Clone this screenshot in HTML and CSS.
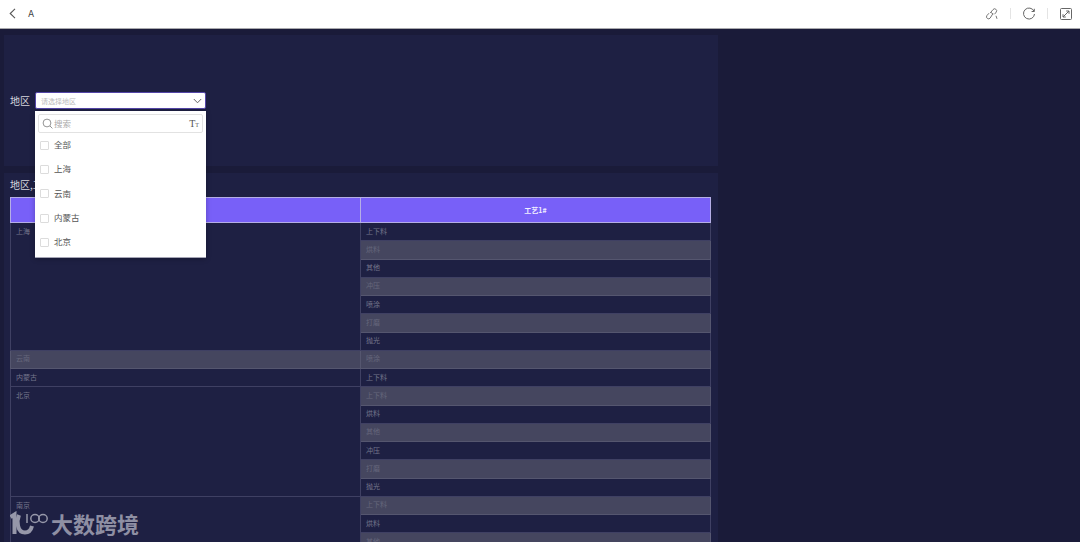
FILE: index.html
```html
<!DOCTYPE html>
<html lang="zh">
<head>
<meta charset="utf-8">
<title>A</title>
<link rel="stylesheet" href="styles.css">
</head>
<body>
<header class="topbar">
  <div class="topbar-left">
    <svg class="back" width="7" height="11" viewBox="0 0 7 11"><path d="M6 .8 1.2 5.5 6 10.2" fill="none" stroke="#555" stroke-width="1.1"/></svg>
    <span class="title">A</span>
  </div>
  <div class="topbar-right">
    <svg class="tool" width="14" height="14" viewBox="0 0 14 14" fill="none" stroke="#777" stroke-width="1"><path d="M5.2 6 8 2.6a2 2 0 0 1 3.2 2.5L9.6 7.2"/><path d="M8 6.5 5.2 11a2 2 0 0 1-3.3-2.4L4 6.2"/><path d="M6 5.4l2.2 1.8"/><path d="M11 8.8l1 3"/></svg>
    <span class="sep"></span>
    <svg class="tool" width="14" height="14" viewBox="0 0 14 14" fill="none" stroke="#666" stroke-width="1"><path d="M12 4.2A5.5 5.5 0 1 0 12.5 7"/><path d="M12.3 1.8v2.7H9.6"/></svg>
    <span class="sep"></span>
    <svg class="tool" width="14" height="14" viewBox="0 0 14 14" fill="none" stroke="#666" stroke-width="1"><rect x="1.5" y="1.5" width="11" height="11" rx="1"/><path d="M4 10 10 4M7.2 4H10v2.8M4 7.2V10h2.8"/></svg>
  </div>
</header>

<main class="content">
  <section class="panel panel-filter">
    <span class="filter-label">地区</span>
    <div class="select">
      <span class="select-placeholder">请选择地区</span>
      <svg width="9" height="6" viewBox="0 0 9 6"><path d="M.8 1 4.5 4.8 8.2 1" fill="none" stroke="#666" stroke-width="1"/></svg>
    </div>
  </section>

  <section class="panel panel-table">
    <h2 class="table-title">地区,工艺分布</h2>
    <table class="data">
      <thead>
        <tr><th>地区</th><th>工艺1#</th></tr>
      </thead>
      <tbody>
        <tr><td rowspan="7">上海</td><td>上下料</td></tr>
        <tr class="alt"><td>烘料</td></tr>
        <tr><td>其他</td></tr>
        <tr class="alt"><td>冲压</td></tr>
        <tr><td>喷涂</td></tr>
        <tr class="alt"><td>打磨</td></tr>
        <tr><td>抛光</td></tr>
        <tr class="alt"><td>云南</td><td>喷涂</td></tr>
        <tr><td>内蒙古</td><td>上下料</td></tr>
        <tr><td rowspan="6">北京</td><td class="alt-cell">上下料</td></tr>
        <tr><td>烘料</td></tr>
        <tr><td class="alt-cell">其他</td></tr>
        <tr><td>冲压</td></tr>
        <tr><td class="alt-cell">打磨</td></tr>
        <tr><td>抛光</td></tr>
        <tr><td rowspan="3">南京</td><td class="alt-cell">上下料</td></tr>
        <tr><td>烘料</td></tr>
        <tr><td class="alt-cell">其他</td></tr>
      </tbody>
    </table>
  </section>
</main>

<div class="dropdown">
  <div class="search">
    <svg width="11" height="11" viewBox="0 0 11 11" fill="none" stroke="#888" stroke-width=".9"><circle cx="5" cy="5" r="3.9"/><path d="M8 8l2.4 2.4"/></svg>
    <span class="search-text">搜索</span>
    <span class="case">T<small>T</small></span>
  </div>
  <ul class="options">
    <li><span class="check"></span>全部</li>
    <li><span class="check"></span>上海</li>
    <li><span class="check"></span>云南</li>
    <li><span class="check"></span>内蒙古</li>
    <li><span class="check"></span>北京</li>
  </ul>
</div>

<div class="watermark">
  <svg class="wm-logo" width="38" height="24" viewBox="0 0 38 24" fill="none" stroke="#9697a9">
    <path d="M.5 6 4.5 3.5V23" stroke-width="4"/>
    <path d="M9 4C6.5 10 7 21.5 15 21.5c3.5 0 6-2.5 7-6.5" stroke-width="4"/>
    <path d="M17 3v9" stroke-width="1.5"/>
    <ellipse cx="25" cy="7.5" rx="4.2" ry="4" stroke-width="1.5"/>
    <ellipse cx="33" cy="7.5" rx="4.2" ry="4" stroke-width="1.5"/>
  </svg>
  <span class="wm-text">大数跨境</span>
</div>
</body>
</html>
```

FILE: styles.css
```css
* { box-sizing: border-box; }
html, body { margin: 0; height: 100%; overflow: hidden; }
body {
  background: #1a1b39;
  font-family: "Noto Sans CJK SC", "Noto Sans", sans-serif;
  position: relative;
}
.topbar {
  height: 29px;
  background: #fff;
  border-bottom: 1px solid #a9a9ad;
  display: flex;
  align-items: center;
  justify-content: space-between;
  padding: 0 7px 1px 9px;
}
.topbar-left { display: flex; align-items: center; gap: 12px; }
.title { font: 9px "Inter", sans-serif; color: #444; }
.topbar-right { display: flex; align-items: center; gap: 11px; }
.sep { width: 1px; height: 11px; background: #e4e4e4; }

.content {
  width: 718px;
  padding: 6px 0 0 4px;
  display: flex;
  flex-direction: column;
  gap: 7px;
}
.panel { background: #1e2043; }
.panel-filter {
  height: 131px;
  display: flex;
  align-items: center;
  padding: 0 6px;
  gap: 5px;
}
.filter-label { font-size: 10px; color: #d6d6de; }
.select {
  width: 171px;
  height: 17px;
  background: #fff;
  border: 1px solid #5446a8;
  border-radius: 2px;
  display: flex;
  align-items: center;
  justify-content: space-between;
  padding: 0 3px 0 5px;
}
.select-placeholder { font-size: 7px; color: #bbb; }

.panel-table { padding: 0 6px; height: 400px; }
.table-title {
  margin: 0;
  height: 24px;
  padding-top: 4px;
  font-size: 10px;
  line-height: 15px;
  font-weight: 400;
  color: #d6d6de;
}
.data {
  width: 701px;
  table-layout: fixed;
  border-collapse: collapse;
  font-size: 7px;
}
.data th {
  height: 25px;
  background: #7860f8;
  color: #f0eeff;
  font-size: 7px;
  font-weight: 700;
  border: 1px solid #b5aee6;
}
.data td {
  height: 18.25px;
  padding: 0 5px 2px;
  line-height: 10px;
  color: #75768c;
  border: 1px solid #3f4063;
  border-top-color: #4a4b6b;
  vertical-align: middle;
}
.data td[rowspan] { vertical-align: top; padding-top: 3px; }
.data tr.alt td, .data td.alt-cell { background: #45465f; color: #66677c; border-color: #55566f; }

.dropdown {
  position: absolute;
  left: 35px;
  top: 111px;
  width: 171px;
  height: 147px;
  background: #fff;
  border-bottom: 1px solid #a5a5b5;
  box-shadow: 0 1px 5px rgba(0,0,0,.25);
  padding: 3px;
}
.search {
  height: 19px;
  border: 1px solid #e2e2e2;
  border-radius: 2px;
  display: flex;
  align-items: center;
  padding: 0 3px 0 3px;
  gap: 1px;
}
.search-text { font-size: 8.5px; line-height: 10px; padding-bottom: 2px; color: #aaa; flex: 1; }
.case { font: 10px "Liberation Serif", serif; color: #555; }
.case small { font-size: 6px; }
.options { list-style: none; margin: -1px 0 0; padding: 0; }
.options li {
  height: 24.3px;
  display: flex;
  align-items: center;
  gap: 5px;
  padding-left: 2px;
  font-size: 8.5px;
  color: #555;
}
.check {
  width: 9px;
  height: 9px;
  margin-top: 2px;
  border: 1px solid #dcdcdc;
  border-radius: 1px;
  background: #fff;
}
.watermark {
  position: absolute;
  left: 10px;
  top: 508px;
  display: flex;
  align-items: flex-start;
  gap: 3px;
}
.wm-logo { margin-top: 3px; }
.wm-text {
  font-size: 22px;
  line-height: 30px;
  font-weight: 700;
  color: #8e8fa3;
}
```
